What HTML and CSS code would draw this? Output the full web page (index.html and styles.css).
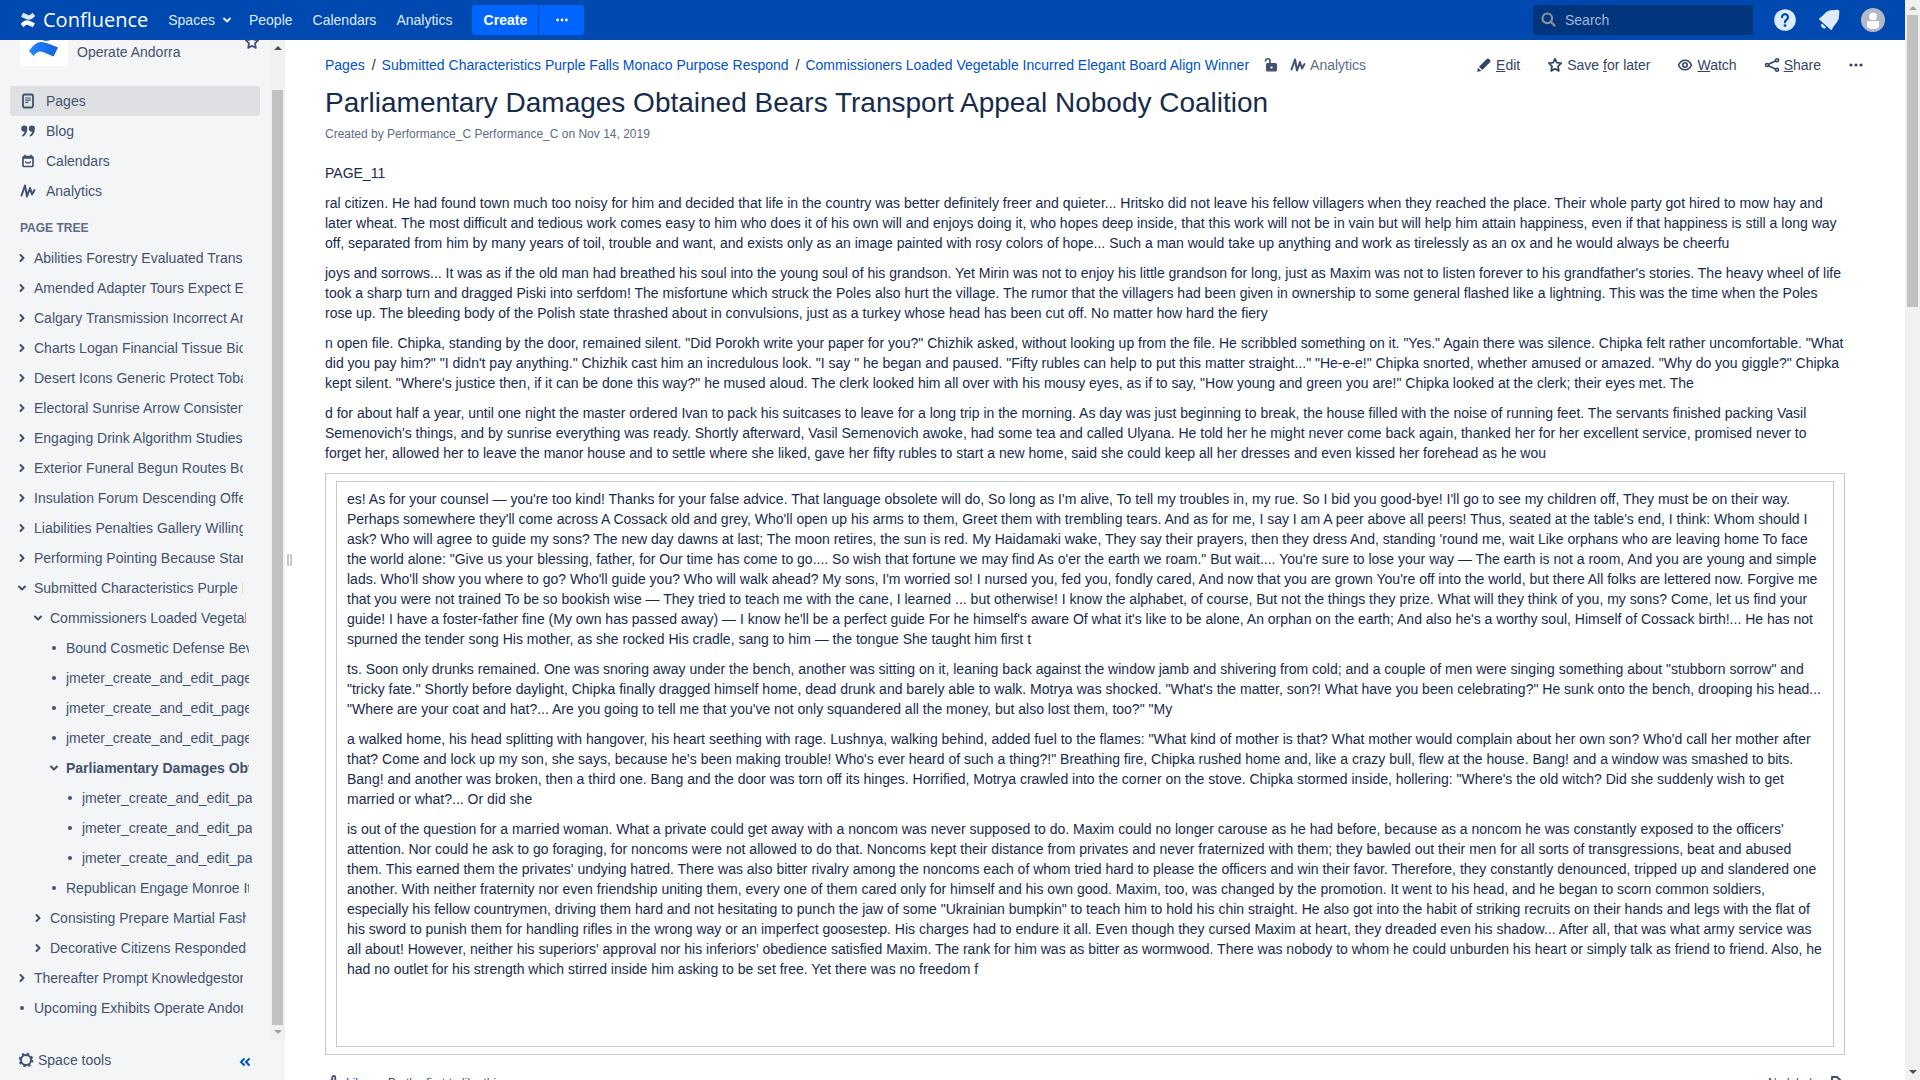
FILE: index.html
```html
<!DOCTYPE html>
<html lang="en">
<head>
<meta charset="utf-8">
<title>Parliamentary Damages Obtained Bears Transport Appeal Nobody Coalition</title>
<link rel="stylesheet" href="styles.css">
</head>
<body>
<svg width="0" height="0" class="sprite" aria-hidden="true">
  <defs>
    <symbol id="i-right" viewBox="0 0 12 12"><path d="M4.500 3 7.500 6 4.500 9" fill="none" stroke="currentColor" stroke-width="2" stroke-linecap="round" stroke-linejoin="round"/></symbol>
    <symbol id="i-down" viewBox="0 0 12 12"><path d="M3 4.500 6 7.500 9 4.500" fill="none" stroke="currentColor" stroke-width="2" stroke-linecap="round" stroke-linejoin="round"/></symbol>
    <symbol id="i-dot" viewBox="0 0 12 12"><circle cx="6" cy="6" r="2" fill="currentColor"/></symbol>
    <symbol id="i-more" viewBox="0 0 16 16"><g fill="currentColor"><circle cx="3" cy="8" r="1.600"/><circle cx="8" cy="8" r="1.600"/><circle cx="13" cy="8" r="1.600"/></g></symbol>
    <symbol id="i-pulse" viewBox="0 0 16 16"><path d="M1.500 12.500 5 2.500 7 13.500 10 5 12 11.500 14.500 7" fill="none" stroke="currentColor" stroke-width="2" stroke-linecap="round" stroke-linejoin="round"/></symbol>
    <symbol id="i-star" viewBox="0 0 16 16"><path d="M8 1.800 9.800 5.700 14.200 6.200 11 9.300 11.800 13.900 8 11.800 4.200 13.900 5 9.300 1.800 6.200 6.200 5.700Z" fill="none" stroke="currentColor" stroke-width="1.800" stroke-linejoin="round"/></symbol>
  </defs>
</svg>
<div class="window">
  <div class="app">
    <header class="topbar">
      <a class="brand" href="#" aria-label="Confluence">
        <svg width="16" height="16" viewBox="0 0 16 16" aria-hidden="true"><path d="M.8 12 3.500 15.200Q6 12.200 8 13L12.800 15.200 15 11.200 9.500 8.800Q4.800 7 .8 12Z" fill="#fff"/><path d="M15.200 4 12.500.8Q10 3.800 8 3L3.200.8 1 4.800 6.500 7.200Q11.200 9 15.200 4Z" fill="#deebff"/></svg>
        <span>Confluence</span>
      </a>
      <nav class="mainnav">
        <a href="#">Spaces <svg width="12" height="12"><use href="#i-down"/></svg></a>
        <a href="#">People</a>
        <a href="#">Calendars</a>
        <a href="#">Analytics</a>
      </nav>
      <div class="create">
        <button class="create-main">Create</button>
        <button class="create-more" aria-label="Create from template"><svg width="14" height="14"><use href="#i-more"/></svg></button>
      </div>
      <label class="search">
        <svg width="16" height="16" viewBox="0 0 16 16" fill="none" stroke="#8993a4" stroke-width="2.200" stroke-linecap="round" aria-hidden="true"><circle cx="6.300" cy="6.300" r="4.800"/><path d="M10 10 13.500 13.500"/></svg>
        <input type="search" placeholder="Search" aria-label="Search">
      </label>
      <div class="tools">
        <a href="#" aria-label="Help"><svg width="24" height="24" viewBox="0 0 24 24"><circle cx="12" cy="12" r="10.800" fill="#deebff"/><path d="M9 9.200a3 3 0 1 1 4.600 2.500c-1.100.7-1.600 1.200-1.600 2.600" fill="none" stroke="#0049b0" stroke-width="2.200" stroke-linecap="round"/><circle cx="12" cy="17.600" r="1.400" fill="#0049b0"/></svg></a>
        <a href="#" aria-label="Notifications"><svg width="24" height="24" viewBox="0 0 24 24" fill="#deebff"><path d="M2.300 10.400C7 7.500 8.500 2.800 13.500 2.200L20.800 1.800Q22.300 1.800 22.300 3.300L22 9C21.600 14 17.500 16 15 21.400Q14.300 22.500 13.400 21.600L2.200 11.500Q1.600 10.800 2.300 10.400Z"/><path d="M5 15.500l4.200 3.900a2.600 2.600 0 0 1-4.200-3.900Z"/></svg></a>
        <a href="#" aria-label="Profile"><svg width="24" height="24" viewBox="0 0 24 24"><circle cx="12" cy="12" r="12" fill="#b3bac5"/><circle cx="12" cy="8.500" r="3.800" fill="#fff"/><path d="M6 14.500c0-1 .6-1.500 1.500-1.500h9c.9 0 1.500.5 1.500 1.500V18c0 2-3 3-6 3s-6-1-6-3Z" fill="#fff"/></svg></a>
      </div>
    </header>
    <div class="body">
      <aside class="sidebar">
        <div class="side-scroll">
          <div class="side-content">
            <div class="space">
              <a class="space-logo" href="#" aria-label="Space home"><svg width="32" height="32" viewBox="0 0 32 32"><defs><linearGradient id="blue" x1="0" x2="1"><stop offset="0" stop-color="#2684ff"/><stop offset="1" stop-color="#0f62dc"/></linearGradient></defs><path d="M1 25Q7 15.500 14 16 18 16.300 30 21.500L25.500 30.500 15 26Q10 24 5.500 30Z" fill="url(#blue)"/><path d="M31 5Q25 15.200 18 15 14 14.700 2 9L6 1 16 5Q21 7 25 1Z" fill="#2684ff"/></svg></a>
              <a class="space-name" href="#">Operate Andorra</a>
              <svg class="space-star" width="16" height="16"><use href="#i-star"/></svg>
            </div>
            <nav class="side-nav">
              <a class="current" href="#"><svg width="16" height="16" viewBox="0 0 16 16" fill="none" stroke="currentColor"><rect x="3" y="1.500" width="10" height="13" rx="1.500" stroke-width="1.800"/><path d="M5.200 5h5.600M5.200 7.200h5.600M5.200 9.400h3" stroke-width="1.200"/></svg>Pages</a>
              <a href="#"><svg width="16" height="16" viewBox="0 0 16 16" fill="currentColor"><path d="M4.300 2.500a3 3 0 0 1 3 3.200c0 3.800-2 6.800-4.300 7.800-.9.300-1.400-.8-.6-1.400 1.200-.9 1.900-2 2.100-3.300A3.100 3.100 0 0 1 4.300 2.500ZM11.900 2.500a3 3 0 0 1 3 3.200c0 3.800-2 6.800-4.300 7.800-.9.300-1.400-.8-.6-1.400 1.200-.9 1.900-2 2.100-3.300a3.100 3.100 0 0 1-.2-6.300Z"/></svg>Blog</a>
              <a href="#"><svg width="16" height="16" viewBox="0 0 16 16" fill="none" stroke="currentColor"><rect x="3" y="3.500" width="10" height="10" rx="1" stroke-width="1.700"/><path d="M3 4.500h10" stroke-width="2.600"/><path d="M5 1.800v2M11 1.800v2" stroke-width="1.600"/><path d="M5.200 8.500q2.800 3.200 5.600 0" stroke-width="1.400"/></svg>Calendars</a>
              <a href="#"><svg width="16" height="16"><use href="#i-pulse"/></svg>Analytics</a>
            </nav>
            <h2 class="tree-title">PAGE TREE</h2>
            <ul class="tree">
              <li><a href="#"><svg><use href="#i-right"/></svg><span>Abilities Forestry Evaluated Transport</span></a></li>
              <li><a href="#"><svg><use href="#i-right"/></svg><span>Amended Adapter Tours Expect Ears</span></a></li>
              <li><a href="#"><svg><use href="#i-right"/></svg><span>Calgary Transmission Incorrect Arrow</span></a></li>
              <li><a href="#"><svg><use href="#i-right"/></svg><span>Charts Logan Financial Tissue Bicycle</span></a></li>
              <li><a href="#"><svg><use href="#i-right"/></svg><span>Desert Icons Generic Protect Tobacco</span></a></li>
              <li><a href="#"><svg><use href="#i-right"/></svg><span>Electoral Sunrise Arrow Consistent</span></a></li>
              <li><a href="#"><svg><use href="#i-right"/></svg><span>Engaging Drink Algorithm Studies</span></a></li>
              <li><a href="#"><svg><use href="#i-right"/></svg><span>Exterior Funeral Begun Routes Box</span></a></li>
              <li><a href="#"><svg><use href="#i-right"/></svg><span>Insulation Forum Descending Offered</span></a></li>
              <li><a href="#"><svg><use href="#i-right"/></svg><span>Liabilities Penalties Gallery Willing</span></a></li>
              <li><a href="#"><svg><use href="#i-right"/></svg><span>Performing Pointing Because Starts</span></a></li>
              <li><a href="#"><svg><use href="#i-down"/></svg><span>Submitted Characteristics Purple Falls</span></a>
                <ul>
                  <li><a href="#"><svg><use href="#i-down"/></svg><span>Commissioners Loaded Vegetable</span></a>
                    <ul>
                      <li><a href="#"><svg><use href="#i-dot"/></svg><span>Bound Cosmetic Defense Beverage</span></a></li>
                      <li><a href="#"><svg><use href="#i-dot"/></svg><span>jmeter_create_and_edit_page</span></a></li>
                      <li><a href="#"><svg><use href="#i-dot"/></svg><span>jmeter_create_and_edit_page</span></a></li>
                      <li><a href="#"><svg><use href="#i-dot"/></svg><span>jmeter_create_and_edit_page</span></a></li>
                      <li><a class="here" href="#"><svg><use href="#i-down"/></svg><span>Parliamentary Damages Obtained</span></a>
                        <ul>
                          <li><a href="#"><svg><use href="#i-dot"/></svg><span>jmeter_create_and_edit_page</span></a></li>
                          <li><a href="#"><svg><use href="#i-dot"/></svg><span>jmeter_create_and_edit_page</span></a></li>
                          <li><a href="#"><svg><use href="#i-dot"/></svg><span>jmeter_create_and_edit_page</span></a></li>
                        </ul>
                      </li>
                      <li><a href="#"><svg><use href="#i-dot"/></svg><span>Republican Engage Monroe Italy</span></a></li>
                    </ul>
                  </li>
                  <li><a href="#"><svg><use href="#i-right"/></svg><span>Consisting Prepare Martial Fashion</span></a></li>
                  <li><a href="#"><svg><use href="#i-right"/></svg><span>Decorative Citizens Responded</span></a></li>
                </ul>
              </li>
              <li><a href="#"><svg><use href="#i-right"/></svg><span>Thereafter Prompt Knowledgestorm</span></a></li>
              <li><a href="#"><svg><use href="#i-dot"/></svg><span>Upcoming Exhibits Operate Andorra</span></a></li>
            </ul>
          </div>
          <div class="scrollbar side-bar" aria-hidden="true">
            <i class="arrow up dark"></i><i class="gap"></i><i class="thumb"></i><i class="arrow down"></i>
          </div>
        </div>
        <div class="side-foot">
          <a href="#"><svg width="16" height="16" viewBox="0 0 16 16" fill="none" stroke="currentColor"><circle cx="8" cy="8" r="5" stroke-width="2"/><circle cx="8" cy="8" r="6.300" stroke-width="2" stroke-dasharray="2.500 2.448"/></svg>Space tools</a>
          <button class="collapse" aria-label="Collapse sidebar"><svg width="12" height="10" viewBox="0 0 12 10" fill="none" stroke="currentColor" stroke-width="2"><path d="M5.500 1.500 2 5l3.500 3.500M10.500 1.500 7 5l3.500 3.500"/></svg></button>
        </div>
      </aside>
      <div class="grip" aria-hidden="true"><i></i><i></i></div>
      <main class="page">
        <div class="page-head">
          <nav class="crumbs" aria-label="Breadcrumbs">
            <a href="#">Pages</a><span>/</span><a href="#">Submitted Characteristics Purple Falls Monaco Purpose Respond</a><span>/</span><a href="#">Commissioners Loaded Vegetable Incurred Elegant Board Align Winner</a>
            <svg class="lock" width="14" height="16" viewBox="0 0 14 16"><rect x="2" y="6" width="11" height="8.500" rx="1.500" fill="currentColor"/><path d="M1.500 4.500V4a2.200 2.200 0 0 1 4.500 0v4" fill="none" stroke="currentColor" stroke-width="1.700"/><rect x="6.500" y="9.500" width="2" height="2" fill="#fff"/></svg>
            <a class="stats" href="#"><svg width="16" height="16"><use href="#i-pulse"/></svg>Analytics</a>
          </nav>
          <div class="actions">
            <a href="#"><svg width="16" height="16" viewBox="0 0 16 16" fill="currentColor"><path d="M1.200 14.800 2 10.700 5.300 14ZM3 9.700 10.800 2a1.500 1.500 0 0 1 2.200 0l1 1a1.500 1.500 0 0 1 0 2.200L6.300 13Z"/></svg><span><u>E</u>dit</span></a>
            <a href="#"><svg width="16" height="16"><use href="#i-star"/></svg><span>Save <u>f</u>or later</span></a>
            <a href="#"><svg width="16" height="16" viewBox="0 0 16 16" fill="none" stroke="currentColor" stroke-width="1.600"><path d="M1.500 8C4.500 1.600 11.500 1.600 14.500 8 11.500 14.400 4.500 14.400 1.500 8Z"/><circle cx="8" cy="8" r="2.200"/></svg><span><u>W</u>atch</span></a>
            <a href="#"><svg width="16" height="16" viewBox="0 0 16 16" fill="none" stroke="currentColor" stroke-width="1.600"><path d="M4.500 7.200 11.500 4M4.500 8.800 11.500 12"/><circle cx="3" cy="8" r="1.500"/><circle cx="13" cy="3.200" r="1.500"/><circle cx="13" cy="12.800" r="1.500"/></svg><span><u>S</u>hare</span></a>
            <a class="more" href="#" aria-label="More actions"><svg width="16" height="16"><use href="#i-more"/></svg></a>
          </div>
        </div>
        <h1>Parliamentary Damages Obtained Bears Transport Appeal Nobody Coalition</h1>
        <p class="byline">Created by Performance_C Performance_C on Nov 14, 2019</p>
        <article>
          <p>PAGE_11</p>
          <p>ral citizen. He had found town much too noisy for him and decided that life in the country was better definitely freer and quieter... Hritsko did not leave his fellow villagers when they reached the place. Their whole party got hired to mow hay and later wheat. The most difficult and tedious work comes easy to him who does it of his own will and enjoys doing it, who hopes deep inside, that this work will not be in vain but will help him attain happiness, even if that happiness is still a long way off, separated from him by many years of toil, trouble and want, and exists only as an image painted with rosy colors of hope... Such a man would take up anything and work as tirelessly as an ox and he would always be cheerfu</p>
          <p>joys and sorrows... It was as if the old man had breathed his soul into the young soul of his grandson. Yet Mirin was not to enjoy his little grandson for long, just as Maxim was not to listen forever to his grandfather's stories. The heavy wheel of life took a sharp turn and dragged Piski into serfdom! The misfortune which struck the Poles also hurt the village. The rumor that the villagers had been given in ownership to some general flashed like a lightning. This was the time when the Poles rose up. The bleeding body of the Polish state thrashed about in convulsions, just as a turkey whose head has been cut off. No matter how hard the fiery</p>
          <p>n open file. Chipka, standing by the door, remained silent. "Did Porokh write your paper for you?" Chizhik asked, without looking up from the file. He scribbled something on it. "Yes." Again there was silence. Chipka felt rather uncomfortable. "What did you pay him?" "I didn't pay anything." Chizhik cast him an incredulous look. "I say " he began and paused. "Fifty rubles can help to put this matter straight..." "He-e-e!" Chipka snorted, whether amused or amazed. "Why do you giggle?" Chipka kept silent. "Where's justice then, if it can be done this way?" he mused aloud. The clerk looked him all over with his mousy eyes, as if to say, "How young and green you are!" Chipka looked at the clerk; their eyes met. The</p>
          <p>d for about half a year, until one night the master ordered Ivan to pack his suitcases to leave for a long trip in the morning. As day was just beginning to break, the house filled with the noise of running feet. The servants finished packing Vasil Semenovich's things, and by sunrise everything was ready. Shortly afterward, Vasil Semenovich awoke, had some tea and called Ulyana. He told her he might never come back again, thanked her for her excellent service, promised never to forget her, allowed her to leave the manor house and to settle where she liked, gave her fifty rubles to start a new home, said she could keep all her dresses and even kissed her forehead as he wou</p>
          <section class="panel">
            <div class="cell">
              <p>es! As for your counsel — you're too kind! Thanks for your false advice. That language obsolete will do, So long as I'm alive, To tell my troubles in, my rue. So I bid you good-bye! I'll go to see my children off, They must be on their way. Perhaps somewhere they'll come across A Cossack old and grey, Who'll open up his arms to them, Greet them with trembling tears. And as for me, I say I am A peer above all peers! Thus, seated at the table's end, I think: Whom should I ask? Who will agree to guide my sons? The new day dawns at last; The moon retires, the sun is red. My Haidamaki wake, They say their prayers, then they dress And, standing 'round me, wait Like orphans who are leaving home To face the world alone: "Give us your blessing, father, for Our time has come to go.... So wish that fortune we may find As o'er the earth we roam." But wait.... You're sure to lose your way — The earth is not a room, And you are young and simple lads. Who'll show you where to go? Who'll guide you? Who will walk ahead? My sons, I'm worried so! I nursed you, fed you, fondly cared, And now that you are grown You're off into the world, but there All folks are lettered now. Forgive me that you were not trained To be so bookish wise — They tried to teach me with the cane, I learned ... but otherwise! I know the alphabet, of course, But not the things they prize. What will they think of you, my sons? Come, let us find your guide! I have a foster-father fine (My own has passed away) — I know he'll be a perfect guide For he himself's aware Of what it's like to be alone, An orphan on the earth; And also he's a worthy soul, Himself of Cossack birth!... He has not spurned the tender song His mother, as she rocked His cradle, sang to him — the tongue She taught him first t</p>
              <p>ts. Soon only drunks remained. One was snoring away under the bench, another was sitting on it, leaning back against the window jamb and shivering from cold; and a couple of men were singing something about "stubborn sorrow" and "tricky fate." Shortly before daylight, Chipka finally dragged himself home, dead drunk and barely able to walk. Motrya was shocked. "What's the matter, son?! What have you been celebrating?" He sunk onto the bench, drooping his head... "Where are your coat and hat?... Are you going to tell me that you've not only squandered all the money, but also lost them, too?" "My</p>
              <p>a walked home, his head splitting with hangover, his heart seething with rage. Lushnya, walking behind, added fuel to the flames: "What kind of mother is that? What mother would complain about her own son? Who'd call her mother after that? Come and lock up my son, she says, because he's been making trouble! Who's ever heard of such a thing?!" Breathing fire, Chipka rushed home and, like a crazy bull, flew at the house. Bang! and a window was smashed to bits. Bang! and another was broken, then a third one. Bang and the door was torn off its hinges. Horrified, Motrya crawled into the corner on the stove. Chipka stormed inside, hollering: "Where's the old witch? Did she suddenly wish to get married or what?... Or did she</p>
              <p>is out of the question for a married woman. What a private could get away with a noncom was never supposed to do. Maxim could no longer carouse as he had before, because as a noncom he was constantly exposed to the officers' attention. Nor could he ask to go foraging, for noncoms were not allowed to do that. Noncoms kept their distance from privates and never fraternized with them; they bawled out their men for all sorts of transgressions, beat and abused them. This earned them the privates' undying hatred. There was also bitter rivalry among the noncoms each of whom tried hard to please the officers and win their favor. Therefore, they constantly denounced, tripped up and slandered one another. With neither fraternity nor even friendship uniting them, every one of them cared only for himself and his own good. Maxim, too, was changed by the promotion. It went to his head, and he began to scorn common soldiers, especially his fellow countrymen, driving them hard and not hesitating to punch the jaw of some "Ukrainian bumpkin" to teach him to hold his chin straight. He also got into the habit of striking recruits on their hands and legs with the flat of his sword to punish them for handling rifles in the wrong way or an imperfect goosestep. His charges had to endure it all. Even though they cursed Maxim at heart, they dreaded even his shadow... After all, that was what army service was all about! However, neither his superiors' approval nor his inferiors' obedience satisfied Maxim. The rank for him was as bitter as wormwood. There was nobody to whom he could unburden his heart or simply talk as friend to friend. Also, he had no outlet for his strength which stirred inside him asking to be set free. Yet there was no freedom f</p>
            </div>
          </section>
        </article>
        <footer class="page-foot">
          <a href="#" class="like"><svg width="16" height="16" viewBox="0 0 16 16"><path d="M2 7.500h2.500l2.800-3.500V2.500a1.500 1.500 0 0 1 3 0V6.500H13.500l-1 7H2Z" fill="none" stroke="#42526e" stroke-width="1.800" stroke-linejoin="round"/></svg>Like</a>
          <span>Be the first to like this</span>
          <span class="labels">No labels <svg width="16" height="16" viewBox="0 0 16 16"><path d="M3 2h5l4 4v8H3Z" fill="none" stroke="#42526e" stroke-width="2" stroke-linejoin="round"/></svg></span>
        </footer>
      </main>
    </div>
  </div>
  <div class="scrollbar page-bar" aria-hidden="true">
    <i class="arrow up"></i><i class="thumb"></i><i class="arrow down dark"></i>
  </div>
</div>
</body>
</html>
```
FILE: styles.css
```css
* { box-sizing: border-box; }

body {
  margin: 0;
  font: 14px/20px "Liberation Sans", Arial, sans-serif;
  color: #172b4d;
  background: #fff;
}

a { color: inherit; text-decoration: none; }
button { font: inherit; border: 0; padding: 0; cursor: pointer; }
svg { flex: none; }
.sprite { display: none; }

.window { display: flex; height: 100vh; overflow: hidden; }
.app { flex: 1; min-width: 0; display: flex; flex-direction: column; }

/* Top bar */
.topbar {
  flex: none;
  height: 40px;
  display: flex;
  align-items: center;
  padding: 0 20px;
  background: #0049b0;
  color: #deebff;
}
.brand {
  display: flex;
  align-items: center;
  gap: 7px;
  color: #fff;
  font: 20px/24px "Open Sans", "Noto Sans", sans-serif;
}
.mainnav { display: flex; gap: 20px; margin-left: 20px; }
.mainnav a { display: flex; align-items: center; gap: 6px; }
.mainnav svg { margin-right: -4px; }
.create { display: flex; gap: 1px; margin-left: 20px; }
.create button {
  height: 30px;
  background: #0065ff;
  color: #fff;
  font-weight: bold;
  display: flex;
  align-items: center;
  justify-content: center;
}
.create .create-main { width: 66px; border-radius: 3px 0 0 3px; }
.create .create-more { width: 45px; border-radius: 0 3px 3px 0; }
.search {
  width: 220px;
  height: 30px;
  margin-left: auto;
  padding: 0 8px;
  display: flex;
  align-items: center;
  gap: 8px;
  border-radius: 3px;
  background: #03357c;
}
.search input {
  flex: 1;
  min-width: 0;
  border: 0;
  padding: 0;
  outline: 0;
  background: none;
  font: inherit;
  color: #b3d0f5;
}
.search input::placeholder { color: #9fb8dc; opacity: 1; }
.tools { display: flex; gap: 20px; margin-left: 20px; }
.tools a { display: flex; }

/* Sidebar */
.body { flex: 1; min-height: 0; display: flex; }
.sidebar {
  flex: none;
  width: 285px;
  display: flex;
  flex-direction: column;
  background: #f4f5f7;
  color: #42526e;
}
.side-scroll { flex: 1; min-height: 0; display: flex; }
.side-content { flex: 1; min-width: 0; overflow: hidden; padding: 0 10px; }
.space {
  height: 26px;
  display: flex;
  align-items: flex-end;
  padding: 0 0 0 10px;
  overflow: hidden;
}
.space-logo {
  width: 48px;
  height: 48px;
  flex: none;
  padding: 8px;
  border-radius: 3px;
  background: #fff;
}
.space-name { margin-left: 9px; padding-bottom: 4px; }
.space-star { margin: 0 0 16px auto; }
.side-nav { margin-top: 20px; }
.side-nav a {
  display: flex;
  align-items: center;
  gap: 10px;
  height: 30px;
  padding-left: 10px;
  border-radius: 3px;
}
.side-nav .current { background: #dfe0e4; }
.tree-title {
  margin: 12px 0 5px 10px;
  font-size: 12px;
  line-height: 20px;
  color: #5e6c84;
}
.tree, .tree ul { list-style: none; margin: 0; padding: 0; }
.tree { width: 233px; padding-left: 6px; }
.tree ul { padding-left: 16px; margin-right: -3px; }
.tree a { display: flex; align-items: center; gap: 6px; height: 30px; }
.tree svg { width: 12px; height: 12px; }
.tree span { flex: 1; overflow: hidden; white-space: nowrap; }
.tree .here { font-weight: bold; }
.side-foot {
  flex: none;
  height: 40px;
  display: flex;
  align-items: center;
  justify-content: space-between;
  padding: 0 34px 0 18px;
}
.side-foot a { display: flex; align-items: center; gap: 4px; }
.collapse { display: flex; padding-top: 4px; background: none; color: #0052cc; }

.grip { flex: none; width: 8px; display: flex; justify-content: center; align-items: center; gap: 1px; }
.grip i { width: 2px; height: 12px; background: #c1c7d0; }

/* Scroll bars */
.scrollbar { flex: none; width: 15px; display: flex; flex-direction: column; align-items: center; background: #f1f1f1; }
.thumb { width: 11px; background: #c1c1c1; }
.arrow { height: 15px; display: flex; align-items: center; }
.arrow::before { content: ""; border: 4px solid transparent; }
.up { align-items: flex-start; padding-top: 2px; }
.up::before { border-bottom-color: #a3a3a3; }
.down::before { border-top-color: #a3a3a3; }
.down { align-items: flex-end; padding-bottom: 2px; }
.up.dark::before { border-bottom-color: #505050; }
.down.dark::before { border-top-color: #505050; }
.side-bar .gap { height: 35px; }
.side-bar .thumb { flex: 1; }
.page-bar .thumb { height: 27%; }
.page-bar .down { margin-top: auto; }

/* Page */
.page { flex: 1; min-width: 0; padding: 10px 60px 0 32px; }
.page-head { display: flex; justify-content: space-between; height: 30px; margin-right: -19px; }
.crumbs { display: flex; align-items: center; color: #42526e; }
.crumbs > a { color: #0052cc; }
.crumbs > span { margin: 0 6px 0 7px; color: #172b4d; }
.crumbs .lock { margin-left: 15px; }
.crumbs .stats { display: flex; align-items: center; gap: 4px; margin-left: 12px; color: #5e6c84; }
.stats svg { color: #42526e; }
.actions { display: flex; align-items: center; gap: 27px; color: #344563; }
.actions a { display: flex; align-items: center; gap: 4px; }
h1 { margin: 5px 0 0; font-size: 28px; font-weight: normal; line-height: 36px; }
.byline { margin: 3px 0 19px; font-size: 12px; color: #5e6c84; }
article p { margin: 0 0 10px; }
.panel { border: 1px solid #c1c7d0; padding: 7px 10px; }
.cell { border: 1px solid #c1c7d0; padding: 7px 10px 67px; }
.cell p:last-child { margin: 0; }
.page-foot { display: flex; align-items: center; margin-top: 18px; font-size: 12px; color: #42526e; }
.like { display: flex; align-items: center; gap: 5px; margin-right: 20px; color: #0052cc; }
.labels { display: flex; align-items: center; gap: 11px; margin-left: auto; }
```
